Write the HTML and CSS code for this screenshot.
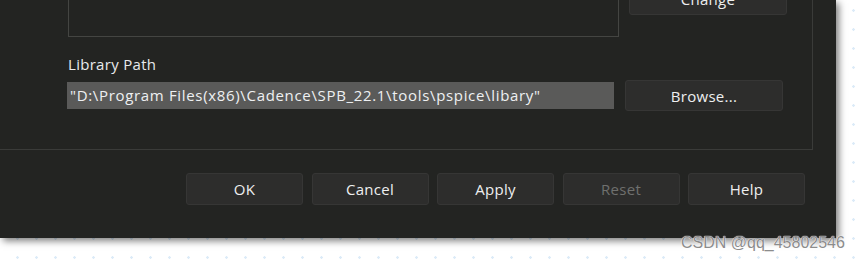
FILE: index.html
```html
<!DOCTYPE html>
<html lang="en">
  <head>
    <meta charset="UTF-8" />
    <meta name="viewport" content="width=device-width, initial-scale=1.0" />
    <title>Library Settings</title>
    <link rel="stylesheet" href="styles.css">
  </head>
  <body>
    <div class="dialog">
      <!-- Group box holding the list and library path -->
      <div class="group">
        <div class="top-row">
          <div class="list-box"></div>
          <button class="btn btn-change" type="button">Change</button>
        </div>

        <label class="field-label" for="libPath">Library Path</label>
        <div class="path-row">
          <div class="path-input" id="libPath">"D:\Program Files(x86)\Cadence\SPB_22.1\tools\pspice\libary"</div>
          <button class="btn btn-browse" type="button">Browse...</button>
        </div>
      </div>

      <!-- Dialog buttons -->
      <div class="actions">
        <button class="btn" type="button">OK</button>
        <button class="btn" type="button">Cancel</button>
        <button class="btn" type="button">Apply</button>
        <button class="btn" type="button" disabled>Reset</button>
        <button class="btn" type="button">Help</button>
      </div>
    </div>

    <div class="watermark">CSDN @qq_45802546</div>
  </body>
</html>
```

FILE: styles.css
```css
/* Page behind the dialog: white with light blue dots */
body {
  margin: 0;
  width: 865px;
  height: 262px;
  overflow: hidden;
  position: relative;
  font-family: "Open Sans", "Noto Sans", sans-serif;
  background-color: #ffffff;
  background-image: radial-gradient(circle, #dcebf8 1px, transparent 1.5px);
  background-size: 19px 19px;
  background-position: 8px 1px;
}

/* Dark dialog window */
.dialog {
  width: 836px;
  height: 238px;
  background: #232422;
  overflow: hidden;
  box-shadow: 3px 3px 7px rgba(0, 0, 0, 0.5);
}

/* Group box (top and left edges are cut off) */
.group {
  margin: -20px 23px 0 -10px;
  height: 170px;
  border: 1px solid #3a3b39;
  padding-left: 77px;
  box-sizing: border-box;
}

.top-row {
  display: flex;
  align-items: flex-start;
  gap: 10px;
}

.list-box {
  width: 551px;
  height: 56px;
  border: 1px solid #444542;
  box-sizing: border-box;
}

/* Shared button look */
.btn {
  width: 117px;
  height: 32px;
  background: #2d2d2c;
  border: 1px solid #363635;
  border-radius: 3px;
  color: #eeeff0;
  font-family: inherit;
  font-size: 15px;
  letter-spacing: 0.3px;
  padding: 0;
}

.btn:disabled {
  color: #6f706e;
}

.btn-change {
  width: 158px;
  margin-top: 2px;
}

.field-label {
  display: block;
  margin-top: 18px;
  color: #e8eaec;
  font-size: 15px;
  letter-spacing: 0.3px;
  line-height: 19px;
}

.path-row {
  display: flex;
  align-items: center;
  gap: 11px;
  margin-top: 6px;
  margin-left: -1px;
}

.path-input {
  width: 547px;
  height: 27px;
  line-height: 27px;
  padding-left: 3px;
  box-sizing: border-box;
  background: #5a5a59;
  color: #eef0f2;
  font-size: 15px;
  letter-spacing: 0.67px;
  white-space: nowrap;
  overflow: hidden;
}

.btn-browse {
  width: 158px;
  height: 31px;
}

/* Row of dialog buttons */
.actions {
  display: flex;
  justify-content: flex-end;
  gap: 8.5px;
  margin-top: 23px;
  padding-right: 31px;
}

/* Site watermark over the corner */
.watermark {
  position: absolute;
  left: 681px;
  top: 234px;
  font-family: "Liberation Sans", Arial, sans-serif;
  font-size: 16px;
  color: #8c8c8c;
  text-shadow: 0 0 1px #ffffff, 0 0 1px #ffffff;
}
```
